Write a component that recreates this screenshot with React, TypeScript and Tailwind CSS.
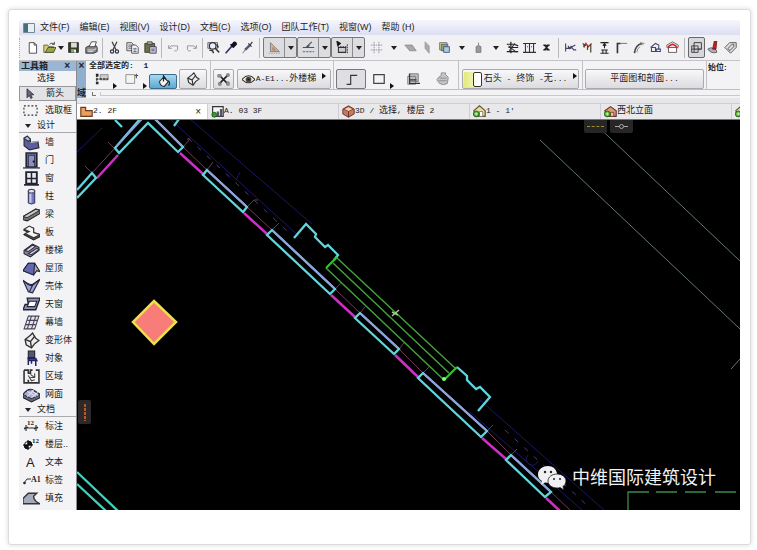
import React from "react";

const menus = ["文件(F)", "编辑(E)", "视图(V)", "设计(D)", "文档(C)", "选项(O)", "团队工作(T)", "视窗(W)", "帮助 (H)"];

const icons: Record<string, React.ReactNode> = {
  new: <path d="M4 2h6l3 3v10H4z M10 2v3h3" fill="#fff" stroke="#333" />,
  open: <><path d="M1 5h5l1 2h6v7H1z" fill="#d8d070" stroke="#554" /><path d="M3 14l3-6h10l-3 6z" fill="#96a846" stroke="#443" /><path d="M8 4q3-3 6 0M14 1v3h-3" fill="none" stroke="#333" /></>,
  save: <><path d="M2 2h12v12H2z" fill="#35401c" stroke="#222" /><path d="M5 2h7v6H5z" fill="#ddd" /><path d="M5 10h6v4H5z" fill="#8a8" /><path d="M9 11h2v3H9z" fill="#fff" /></>,
  print: <><path d="M1 8l4-2h9l1 2v5l-4 2H1z" fill="#888" stroke="#222" /><path d="M5 7l3-6h6l-2 6z" fill="#fff" stroke="#333" /><path d="M3 11h8l3-2M4 13h6" stroke="#eee" fill="none" /></>,
  cut: <><path d="M5 1l5 10M11 1L6 11" fill="none" stroke="#444" strokeWidth="1.6" /><circle cx="5" cy="13" r="2" fill="none" stroke="#334" strokeWidth="1.5" /><circle cx="11" cy="13" r="2" fill="none" stroke="#334" strokeWidth="1.5" /></>,
  copy: <><path d="M1 2h6l2 2v8H1z" fill="#ddd" stroke="#444" /><path d="M3 5h4M3 7h4M3 9h4" stroke="#667" /><path d="M7 5h5l3 3v7H7z" fill="#fff" stroke="#333" /><path d="M9 9h4M9 11h4M9 13h4" stroke="#446" /></>,
  paste: <><path d="M1 3h12v11H1z" fill="#6f7040" stroke="#332" /><path d="M4 1h6v3H4z" fill="#bbb" stroke="#333" /><path d="M7 7h8v8H7z" fill="#ccd" stroke="#335" /><path d="M9 10h4M9 12h4" stroke="#446" /></>,
  undo: <path d="M2 5v4h4M2 9l3-3h8v5q-1 2-4 1" fill="none" stroke="#999" strokeWidth="1.2" />,
  redo: <path d="M14 5v4h-4M14 9l-3-3H3v5q1 2 4 1" fill="none" stroke="#999" strokeWidth="1.2" />,
  find: <><path d="M1 2h12v7H1z" fill="#cdd" stroke="#556" /><circle cx="7" cy="6" r="4" fill="#eef" stroke="#333" strokeWidth="1.4" /><path d="M10 9l5 5M3 11l4 1 1 3M12 4l2 4" stroke="#333" strokeWidth="1.8" fill="none" /></>,
  dropper: <><path d="M2 15l8-9" stroke="#336" strokeWidth="2" /><path d="M8 4l4 4M9 6l3-4q3-1 3 2l-4 4" stroke="#112" strokeWidth="2" fill="#112" /></>,
  needle: <><path d="M2 15l4-5" stroke="#555" /><path d="M5 11l6-6" stroke="#557" strokeWidth="3" /><path d="M9 3l4 4M11 5l3-4" stroke="#334" strokeWidth="1.4" /></>,
  ruler: <><path d="M3 2v11h11z" fill="#e7b077" stroke="#678" /><path d="M6 8v3h3z" fill="#ddd" stroke="#678" /><path d="M1 15h14" stroke="#79c" strokeDasharray="2 1" /></>,
  guide: <><path d="M1 8h14M5 8l7-7M9 5l-2 3" stroke="#456" strokeWidth="1.4" fill="none" /><path d="M1 13h14" stroke="#58c" strokeWidth="1.6" strokeDasharray="3 1" /></>,
  snap: <><path d="M1 0l1 6 4-3z" fill="#111" stroke="#111" /><path d="M3 8h9v6H3z" fill="#ccc" stroke="#333" strokeWidth="1.3" /><path d="M2 7h12M14 4v11" stroke="#222" strokeDasharray="2 1" /></>,
  grid: <path d="M5 1v14M11 1v14M1 5h14M1 11h14" stroke="#889" strokeDasharray="2 1" fill="none" />,
  plane: <path d="M1 5h9l5 7H7z" fill="#aaa" stroke="#888" />,
  vplane: <path d="M5 1l5 5v9L5 9z" fill="#aaa" stroke="#999" />,
  layers: <><path d="M2 2h9v9H2z" fill="#e6dc76" stroke="#667" /><path d="M4 4h8v8H4z" fill="#87a87c" stroke="#557" /><path d="M7 7h7v7H7z" fill="#acd" stroke="#447" /></>,
  lock: <path d="M5 7q3-3 6 0v7H5zM8 5V2" fill="#999" stroke="#777" />,
  tree: <><path d="M1 4h9l5 2M3 8h12M1 13h14M6 1v14" fill="none" stroke="#222" strokeWidth="1.5" /><path d="M3 6l10 8M11 3L4 12" fill="none" stroke="#333" strokeWidth="1.3" /></>,
  table: <path d="M0 3h16M3 3v11M8 3v11M13 3v11M0 14h16M5 7h1M10 7h1" fill="none" stroke="#333" strokeWidth="1.3" />,
  cross: <path d="M4 5h3l1 2 1-2h3M4 11h3l1-3 1 3h3M5 5l6 6M11 5l-6 6" fill="none" stroke="#222" strokeWidth="1.5" />,
  trim: <path d="M2 3v10M2 9h7M6 9l8-4M8 6l4 5h3M5 6l2 4" stroke="#446" strokeWidth="1.4" fill="none" />,
  split: <><path d="M3 7l3-4 3 4 4-4" stroke="#b33" fill="none" strokeWidth="1.8" /><path d="M4 4v4M8 6v5M12 4v10M2 3l4 3" stroke="#443" strokeWidth="1.5" /></>,
  adjust: <path d="M3 2h10M8 3v6M6 6l2-3 2 3M4 11h8M6 11v4M10 11v4M3 15h10" stroke="#222" strokeWidth="1.3" fill="none" />,
  corner: <><path d="M3 15V3h4" fill="none" stroke="#333" strokeWidth="2" /><path d="M7 3h8" stroke="#888" strokeWidth="1.4" /></>,
  fillet: <><path d="M3 15Q4 5 12 3" fill="none" stroke="#444" strokeWidth="2" /><path d="M10 2l5 1-4 2M6 14q0-5 4-7" stroke="#777" fill="none" /></>,
  resize: <path d="M2 8l6-5 4 2v5M3 8h5v5H3zM9 10h5v3H9z" fill="none" stroke="#447" strokeWidth="1.3" />,
  roof: <><path d="M3 8h10v6H3z" fill="#fff" stroke="#444" /><path d="M1 8V5l7-4 7 4v3" fill="none" stroke="#555" /><path d="M2 9l2-3 4-2 4 2 2 3" fill="none" stroke="#d22" strokeWidth="2" /></>,
  group: <><path d="M5 2h9v8H5z" fill="none" stroke="#222" /><path d="M2 6h8v8H2z" fill="#ccc" fillOpacity="0.5" stroke="#333" /><path d="M5 6v8M2 10h12" stroke="#333" /></>,
  brush: <><path d="M1 10q4-3 7-1 5 2 4 5-7 2-11-4z" fill="#a9b0c0" stroke="#555" /><path d="M9 0h3l-1 10H7z" fill="#c22" stroke="#611" /></>,
  tag: <path d="M1 8l6-6h8v6l-7 7zM5 9l5-5h2v3l-5 5z" fill="#ddd" stroke="#444" />,
  arrow: <path d="M4 1v12l3-3 2 4 2-1-2-4h4z" fill="#667" stroke="#223" />,
  marquee: <path d="M1 3h14v10H1z" fill="none" stroke="#333" strokeDasharray="2 2" strokeWidth="1.3" />,
  wall: <><path d="M1 4l3-2 3 3v3l7-1 1 6-9 2-5-4z" fill="#5c5f9b" stroke="#223" /><path d="M1 4l3-2 3 3-2 2z" fill="#bcc0e0" stroke="#334" /><path d="M7 8l7-1" stroke="#ccd" /></>,
  door: <><path d="M3 1h10v13H3z" fill="#6d72a8" stroke="#223" strokeWidth="1.5" /><path d="M5 3h6v11H5z" fill="#8b91c4" stroke="#334" /><circle cx="10" cy="9" r="1" fill="#112" /><path d="M0 15h16" stroke="#334" strokeWidth="1.2" /></>,
  window: <><path d="M3 2h10v11H3z" fill="#e8eaf4" stroke="#223" strokeWidth="1.8" /><path d="M8 2v11M3 8h10" stroke="#223" strokeWidth="1.4" /><path d="M1 14h14" stroke="#223" strokeWidth="1.6" /></>,
  column: <><path d="M5 3v11q3 2 6 0V3z" fill="#7579b8" stroke="#336" /><path d="M7 4v10" stroke="#c5c8ea" strokeWidth="2" /><ellipse cx="8" cy="3" rx="3" ry="1.7" fill="#e6e6f0" stroke="#446" /></>,
  beam: <><path d="M0 10L12 3l4 1v3L4 14l-4-1z" fill="#777" stroke="#222" /><path d="M0 10L12 3l4 1L4 11z" fill="#ccc" stroke="#333" /></>,
  slab: <><path d="M1 6l5-3 4 1v4l6 2v2l-6 3-9-5 5-2z" fill="#555" stroke="#222" /><path d="M1 5l5-3 4 2v4l6 2-6 3-8-4 4-2z" fill="#f4f4f4" stroke="#333" /></>,
  stair: <><path d="M1 8l8-6 6 3v3l-8 6-6-3z" fill="#889" stroke="#223" /><path d="M2 8l7-5 3 1-7 5zM5 11l8-5 2 1-7 5z" fill="#dde" stroke="#334" /></>,
  roof3d: <><path d="M0 10L5 3l6 0 5 8-3-1-3 4z" fill="#aaa" stroke="#222" /><path d="M0 10l5-7h6l-1 11z" fill="#6368b0" stroke="#224" /></>,
  shell: <><path d="M0 2q6 5 9 4l7-5-7 13-4-1z" fill="#9ba2d6" stroke="#223" /><path d="M1 3q5 5 8 4L6 13M9 7l6-5" fill="none" stroke="#223" /></>,
  skylight: <><path d="M4 2h12l-4 11H0l2-5h3z" fill="#8c92b8" stroke="#223" strokeWidth="1.3" /><path d="M6 5h7l-2 5H4z" fill="#fff" stroke="#223" /></>,
  curtain: <><path d="M5 2h10l-4 12H1z" fill="#e4e4ee" stroke="#445" /><path d="M8 2L4 14M12 2L8 14M4 6h10M2 10h10" stroke="#445" fill="none" /></>,
  morph: <><path d="M2 7l5-4 2-2 3 5 3 2-4 3-3 4-5-3z" fill="#eee" stroke="#333" strokeWidth="1.3" /><path d="M2 7l5 2 1 6M7 9l4-5" fill="none" stroke="#333" strokeWidth="1.3" /></>,
  chair: <><path d="M5 1h6v6H5z" fill="#557" stroke="#222" /><path d="M5 8h7l1 2H6z" fill="#558" stroke="#226" strokeWidth="1.4" /><path d="M5 7v7M12 10v5M8 10v3" stroke="#226" strokeWidth="1.4" /></>,
  zone: <><path d="M1 2h4v3h2V2h2M12 2h3v12H1V2M5 14v-3" fill="none" stroke="#333" strokeWidth="1.5" /><path d="M7 6l4 3M11 5v4H7M5 7l3 5 3-1" fill="none" stroke="#444" /></>,
  mesh: <><path d="M0 8q5-7 10-4t6 4v3l-8 4-8-4z" fill="#667" stroke="#223" /><path d="M0 8q5-6 9-4t7 4l-8 4z" fill="#a9afd4" stroke="#334" /><path d="M4 5l8 5M8 4l6 5M4 10l6-6M8 11l6-5" stroke="#dde" fill="none" /></>,
  polyline: <path d="M2 14h5V3h8" fill="none" stroke="#333" strokeWidth="1.4" />,
  box: <path d="M2 3h12v10H2z" fill="none" stroke="#444" strokeWidth="1.4" />,
  cube: <><path d="M4 2h10v9H4z" fill="#bbb" stroke="#777" /><path d="M2 5h9v9H2z" fill="none" stroke="#777" /><path d="M4 2v11h12M4 9h8" fill="none" stroke="#333" strokeWidth="1.5" /></>,
  pot: <path d="M6 1h5v2l3 3-1 7q-5 3-9 0L1 9l2-3 3-2zM4 7h8M3 10h9" fill="#c5c5c8" stroke="#888" />,
  eye: <><path d="M0 8q8-9 16 0-8 8-16 0z" fill="#eee" stroke="#332" strokeWidth="1.3" /><circle cx="8" cy="8" r="3.5" fill="#544" /><circle cx="8" cy="8" r="1.3" fill="#111" /></>,
  nodes: <><path d="M4 4l9 9M13 3L3 13" stroke="#222" strokeWidth="2" /><path d="M1 2h4v3H1zM12 11h3v4h-3zM2 12h3v3H2zM12 1h3v3h-3z" fill="#999" stroke="#777" /></>,
  fillBucket: <><path d="M3 8l5-5 6 5-5 6q-5 0-6-6z" fill="#f4f4f4" stroke="#222" strokeWidth="1.3" /><path d="M8 8V1l3 4M14 7q3 4 0 6" fill="none" stroke="#222" strokeWidth="1.5" /></>,
  select: <><path d="M1 2h3v3H1zM1 11h3v3H1z" fill="#222" /><path d="M6 3h9v6H6z" fill="#ccc" stroke="#888" /><path d="M1 8h14M2 3v10" stroke="#333" strokeWidth="1.5" strokeDasharray="3 1" /></>,
  rotate: <><path d="M1 3h10v10H1z" fill="#f4f4f4" stroke="#888" /><path d="M11 4h4M13 2v5" stroke="#555" strokeWidth="1.3" /></>,
  folder: <path d="M1 3h6v4h8v7H1z" fill="#e8a05c" stroke="#6b3a1c" strokeWidth="1.4" />,
  layout: <><path d="M2 2h13v12H2z" fill="#f4f4f4" stroke="#333" strokeWidth="1.4" /><path d="M7 8h3v6H7zM11 5h3v9h-3z" fill="#556" /><circle cx="4" cy="12" r="3" fill="#3a9b2c" stroke="#195c14" /></>,
  view3d: <><path d="M1 5l7-4 7 4v6l-7 4-7-4z" fill="#c97a5b" stroke="#522" /><path d="M2 5l6 3 6-3-6-3z" fill="#f1d2a6" stroke="#833" /><path d="M8 8v7" stroke="#522" /></>,
  house: <><path d="M1 7l7-6 7 6v7H4z" fill="#ead9a0" stroke="#553" strokeWidth="1.4" /><path d="M8 8h4v6H8z" fill="#fff" stroke="#775" /><circle cx="4" cy="11" r="3.6" fill="#4fae2d" stroke="#1b6412" /><path d="M4 9v4M2 11h4" stroke="#dfd" /></>,
  brick: <><path d="M1 7l7-5 7 5v7H4z" fill="#dca070" stroke="#633" strokeWidth="1.4" /><path d="M8 9h4v5H8z" fill="#e8c49a" stroke="#733" /><circle cx="4" cy="11" r="3.6" fill="#4fae2d" stroke="#1b6412" /><path d="M4 9v4M2 11h4" stroke="#dfd" /></>,
  fill: <path d="M0 13V8l5-5h8l-3 3q0 4 6 7z" fill="#a6a9bb" stroke="#333" strokeWidth="1.3" />,
};

const Icon = ({ name, className = "size-[14px]" }: { name: string; className?: string }) => (
  <svg viewBox="0 0 16 16" className={`${className} shrink-0`} aria-hidden="true">{icons[name]}</svg>
);

const Caret = ({ className = "" }: { className?: string }) => (
  <svg viewBox="0 0 6 4" className={`h-1 w-1.5 shrink-0 ${className}`} aria-hidden="true"><path d="M0 0h6L3 4z" fill="#222" /></svg>
);

const RightCaret = ({ className = "" }: { className?: string }) => (
  <svg viewBox="0 0 4 6" className={`h-1.5 w-1 shrink-0 ${className}`} aria-hidden="true"><path d="M0 0v6l4-3z" fill="#111" /></svg>
);

// Latin runs are set a step smaller so they keep the half width of the Chinese glyphs
const Mixed = ({ text }: { text: string }) => (
  <span className="whitespace-pre font-['Liberation_Mono','Noto_Sans_CJK_SC',monospace] text-[9px]">
    {text.split(/([\x20-\x7e]+)/).map((part, i) => (
      <span key={i} className={/^[\x20-\x7e]/.test(part) ? "text-[8px]" : ""}>{part}</span>
    ))}
  </span>
);

const ToolbarButton = ({ name, wide = false }: { name: string; wide?: boolean }) => (
  <button
    aria-label={name}
    className={[
      "flex h-5 shrink-0 items-center justify-center",
      wide ? "w-[18px]" : "w-[17px]",
    ].join(" ")}
  >
    {name === "caret" ? <Caret /> : <Icon name={name} className="size-[13px]" />}
  </button>
);

const Separator = ({ wide = false }: { wide?: boolean }) => (
  <span className={["flex h-5 shrink-0 justify-center", wide ? "w-[7px]" : "w-[5px]"].join(" ")}>
    <span className="w-px bg-[#b9b9bd]" />
  </span>
);

const Toolbar = () => (
  <div className="flex h-[26px] items-center overflow-hidden border-b border-[#c4c4c8] bg-[#f1f0f3]">
    <span className="mr-px h-5 w-px shrink-0 border-l border-dotted border-[#aaa]" />
    <span className="w-0.5 shrink-0" />
    <ToolbarButton wide name="new" />
    <ToolbarButton name="open" />
    <Caret />
    {["save", "print"].map((n) => <ToolbarButton key={n} wide name={n} />)}
    <Separator />
    {["cut", "copy", "paste"].map((n) => <ToolbarButton key={n} wide name={n} />)}
    <Separator />
    {["undo", "redo"].map((n) => <ToolbarButton key={n} wide name={n} />)}
    <Separator />
    {["find", "dropper", "needle"].map((n) => <ToolbarButton key={n} name={n} />)}
    <Separator wide />
    {["ruler", "guide", "snap"].map((n) => (
      <div key={n} className="flex h-[21px] w-[34px] shrink-0 rounded-[2px] border border-[#77777c] bg-[#dddde0]">
        <button aria-label={n} className="flex flex-1 items-center justify-center border-r border-[#8a8a90]">
          <Icon name={n} className="size-[13px]" />
        </button>
        <button aria-label={`${n} options`} className="flex w-[11px] items-center justify-center"><Caret /></button>
      </div>
    ))}
    <span className="w-[3px] shrink-0" />
    {["grid", "caret", "plane", "vplane", "layers", "caret", "lock", "caret", "tree", "table", "cross"].map((n, i) => (
      <ToolbarButton key={i} name={n} />
    ))}
    <Separator wide />
    {["trim", "split", "adjust", "corner", "fillet", "resize", "roof"].map((n) => <ToolbarButton key={n} name={n} />)}
    <Separator wide />
    <button aria-label="group" className="flex h-[21px] w-[17px] shrink-0 items-center justify-center rounded-[2px] border border-[#66666c] bg-[#d8d8dc]">
      <Icon name="group" className="size-[13px]" />
    </button>
    {["brush", "tag"].map((n) => <ToolbarButton key={n} name={n} />)}
  </div>
);

const designTools = [
  ["wall", "墙"], ["door", "门"], ["window", "窗"], ["column", "柱"], ["beam", "梁"],
  ["slab", "板"], ["stair", "楼梯"], ["roof3d", "屋顶"], ["shell", "壳体"], ["skylight", "天窗"],
  ["curtain", "幕墙"], ["morph", "变形体"], ["chair", "对象"], ["zone", "区域"], ["mesh", "网面"],
];

const ToolRow = ({ icon, label }: { icon: React.ReactNode; label: string }) => (
  <button className="flex h-[18px] w-full items-center whitespace-nowrap pl-1 text-left">
    <span className="flex w-[22px] shrink-0 items-center">{icon}</span>
    {label}
  </button>
);

const DimensionIcon = () => (
  <svg viewBox="0 0 16 16" className="size-4" aria-hidden="true">
    <path d="M1 10h14M3 7v6M13 7v6M1 11l4-2M11 11l4-2" stroke="#333" strokeWidth="1.2" />
    <text x="4" y="7" fontSize="7" fontWeight="bold" fontFamily="Liberation Serif" fill="#222">12</text>
  </svg>
);

const LevelIcon = () => (
  <svg viewBox="0 0 16 16" className="size-4" aria-hidden="true">
    <circle cx="5" cy="9" r="3.5" fill="#fff" stroke="#111" />
    <path d="M5 9V5a4 4 0 0 1 4 4zM5 9v4a4 4 0 0 1-4-4zM0 9h10M5 4v10" fill="#111" stroke="#111" />
    <text x="9" y="7" fontSize="7" fontWeight="bold" fontFamily="Liberation Serif" fill="#222">12</text>
  </svg>
);

const LabelIcon = () => (
  <svg viewBox="0 0 18 16" className="h-4 w-[18px]" aria-hidden="true">
    <path d="M1 11l3-4h4" fill="none" stroke="#333" />
    <circle cx="1.500" cy="11" r="1.3" fill="#222" />
    <text x="8" y="10" fontSize="8" fontWeight="bold" fontFamily="Liberation Serif" fill="#222">A1</text>
  </svg>
);

const Toolbox = () => (
  <aside className="w-[58px] shrink-0 overflow-hidden border-r border-[#8b8b90] bg-[#f3f2f5] text-[9px] leading-none">
    <div className="flex h-[10px] items-center justify-between bg-[#9ab6d3] pl-0.5 pr-1.5 font-bold">
      工具箱
      <button aria-label="关闭工具箱" className="text-[10px]">×</button>
    </div>
    <p className="flex h-[15px] items-center pl-[18px]">选择</p>
    <button className="flex h-[15px] w-full items-center border border-[#98989c] bg-[#e2e1e5] pl-1 text-left">
      <span className="w-[22px]"><Icon name="arrow" className="size-3" /></span>箭头
    </button>
    <ToolRow icon={<Icon name="marquee" className="size-[15px]" />} label="选取框" />
    <button className="flex h-[14px] w-full items-center gap-1.5 border-b border-[#aaa] pl-1.5">
      <Caret />设计
    </button>
    {designTools.map(([icon, label]) => (
      <ToolRow key={icon} icon={<Icon name={icon} className="size-[17px]" />} label={label} />
    ))}
    <button className="flex h-[14px] w-full items-center gap-1.5 border-b border-[#aaa] pl-1.5">
      <Caret />文档
    </button>
    <ToolRow icon={<DimensionIcon />} label="标注" />
    <ToolRow icon={<LevelIcon />} label="楼层.." />
    <ToolRow icon={<span className="pl-[3px] text-[13px]">A</span>} label="文本" />
    <ToolRow icon={<LabelIcon />} label="标签" />
    <ToolRow icon={<Icon name="fill" className="size-[17px]" />} label="填充" />
  </aside>
);

const panelButton = "flex h-5 shrink-0 items-center justify-center rounded-[2px] border border-[#a9a9ae] bg-linear-to-b from-[#f8f8fa] to-[#dcdce0]";

const Divider = ({ className = "" }: { className?: string }) => (
  <span className={`w-px shrink-0 self-stretch bg-[#c2c2c6] ${className}`} />
);

const InfoBox = () => (
  <div className="flex h-[37px] overflow-hidden bg-[#f3f2f5] text-[9px] leading-none">
    <div className="flex w-[9px] shrink-0 flex-col items-center justify-between bg-[#8fafcf]">
      <button aria-label="关闭信息框" className="text-[10px] font-bold">×</button>
      <span className="font-bold">域</span>
    </div>
    <div className="flex min-w-0 flex-1 flex-col">
      <div className="flex h-[29px] border-b border-[#bdbdc2]">
        <div className="w-[124px] shrink-0">
          <p className="h-2 whitespace-pre pl-[3px] pt-px font-['Liberation_Mono','Noto_Sans_CJK_SC',monospace] text-[8px] font-bold">全部选定的:  1</p>
          <div className="flex h-5 items-center pl-[9px]">
            <Icon name="select" />
            <RightCaret className="ml-1 self-end" />
            <Icon name="rotate" className="ml-2 size-[14px]" />
            <RightCaret className="ml-1 self-end" />
            <button aria-label="填充" className="ml-0.5 flex h-[15px] w-7 shrink-0 items-center justify-center self-end rounded-[2px] border border-[#3c6c8c] bg-linear-to-b from-[#a8d8f0] to-[#5ba8d4]">
              <Icon name="fillBucket" className="size-[13px]" />
            </button>
            <button aria-label="变形体" className={`${panelButton} ml-0.5 w-7`}><Icon name="morph" className="size-[14px]" /></button>
          </div>
        </div>
        <Divider />
        <div className="flex items-end gap-[3px] px-0.5">
          <button aria-label="编辑节点" className={`${panelButton} w-[21px]`}><Icon name="nodes" className="size-[13px]" /></button>
          <button className={`${panelButton} w-[94px]`}>
            <Icon name="eye" className="mr-px size-[13px]" />
            <Mixed text="A-E1...外楼梯" />
            <RightCaret className="mb-1.5 ml-1.5" />
          </button>
        </div>
        <Divider />
        <div className="flex items-end">
          <button aria-label="折线" className="mx-0.5 flex h-5 w-[30px] items-center justify-center rounded-[2px] border border-[#77777c] bg-[#dfdfe3]">
            <Icon name="polyline" className="size-[13px]" />
          </button>
          <button aria-label="矩形" className="flex h-5 w-[30px] items-center justify-center gap-1"><Icon name="box" /><RightCaret className="self-end" /></button>
          <button aria-label="体块" className="flex h-5 w-[30px] items-center justify-center"><Icon name="cube" /></button>
          <button aria-label="壶" className="flex h-5 w-[30px] items-center justify-center"><Icon name="pot" /></button>
        </div>
        <Divider />
        <div className="flex items-end px-[3px]">
          <button className={`${panelButton} w-[117px]`}>
            <span className="mr-0.5 flex h-[15px] w-[18px] justify-end bg-linear-to-r from-[#e3e97b] to-[#fafbe0]">
              <span className="w-[9px] rounded-[2px] border border-[#333] bg-white" />
            </span>
            <Mixed text="石头 - 终饰 -无..." />
            <RightCaret className="mb-1.5 ml-1.5" />
          </button>
        </div>
        <Divider />
        <div className="flex items-end px-0.5">
          <button className={`${panelButton} w-[119px]`}><Mixed text="平面图和剖面..." /></button>
        </div>
        <Divider />
        <p className="whitespace-nowrap pl-px pt-[3px] text-[8px] font-bold">始位:</p>
      </div>
      <div className="flex flex-1 items-center pl-1.5">
        <span className="h-1 w-1 border-l border-b border-[#777]" />
        <span className="ml-1 h-1 flex-1 border-b border-l border-[#c9c9cd]" />
      </div>
    </div>
  </div>
);

const tabs = [
  { icon: "folder", label: "2. 2F", active: true },
  { icon: "layout", label: "A. 03 3F" },
  { icon: "view3d", label: "3D / 选择, 楼层 2" },
  { icon: "house", label: "1 - 1'" },
  { icon: "brick", label: "西北立面" },
  { icon: "house", label: "" },
];

const TabBar = () => (
  <div role="tablist" className="flex h-[22px] overflow-hidden border-b border-[#77777c] bg-[#e6e5e8] pt-[5px] leading-none">
    {tabs.map(({ icon, label, active }, i) => (
      <button
        key={i}
        role="tab"
        aria-selected={!!active}
        aria-label={label || "立面"}
        className={[
          "flex w-[131px] shrink-0 items-center border-r border-t border-[#cfced2] pl-[3px]",
          active ? "bg-white" : "bg-[#e9e8eb]",
        ].join(" ")}
      >
        <Icon name={icon} className="size-[13px]" />
        <Mixed text={label} />
        {active && <span className="ml-auto mr-1.5 text-[10px]">×</span>}
      </button>
    ))}
  </div>
);

const walls = [
  "M77 190L92 173L96 178L77 198", "M140 119L115 148L119 153L148 123L178 152L183 147L155 119",
  "M207 170L247 207L243 212L203 175Z", "M272 230L335 289L330 294L267 235Z",
  "M360 313L399 349L394 354L355 318Z", "M423 373L487 431L481 437L418 378Z",
  "M511 455L551 492L545 497L506 460Z",
];

const Canvas = () => (
  <div className="relative bg-black">
    <svg viewBox="77 120 663 390" className="block w-full" role="img" aria-label="2F 平面图" fill="none">
      <g stroke="#1c1668" strokeWidth="1">
        <path d="M77 152L102 128M170 119L302 239M190 119L312 224M480 400L604 510M470 412L582 510M240 172l-4 8M528 455a6 6 0 1 0 10 6" />
      </g>
      <g stroke="#5b3280" strokeWidth="1" strokeDasharray="5 8">
        <path d="M188 138L288 232M505 430L590 508" />
      </g>
      <g stroke="#6d3a50" strokeWidth="1">
        <path d="M92 173L115 148M183 147L207 170M247 207L272 230M335 289L360 313M399 349L423 373M487 431L511 455M551 492L570 510" />
        <path d="M108 142l6 6M85 166l6 6M183 147l7-8h-3M207 170l6-8M247 207l7-7h4M272 230l7-7M335 289l6-6M360 313l5-6M399 349l5-6M423 373l6-6M487 431l6-6M511 455l6-6" />
      </g>
      <path d="M97 178L118 155M180 153L203 174M244 213L267 234M331 295L355 317M395 355L418 377M482 438L506 459M546 498L560 511" stroke="#cf2fc4" strokeWidth="2.5" />
      <g stroke="#62d5dc" strokeWidth="2.3">
        {walls.map((d) => <path key={d} d={d} />)}
        <path d="M294 238L306 224L316 234L315 237L325 247L328 245L338 255L334 260M457 367L467 376L467 380L476 389L480 387L490 397L478 411M115 120L122 127M179 119L174 126" />
        <path d="M77 472L118 511M77 484L106 511" stroke="#3fd0c0" />
      </g>
      <path d="M142 119L117 146M155 119L182 146M208 171L246 206M273 231L334 288M361 314L398 348M424 374L486 430M512 456L550 491" stroke="#9a9ce0" strokeWidth="1.8" />
      <path d="M337 258L455 368M333 263L449 373M326 268L444 380" stroke="#43a03a" strokeWidth="1.5" />
      <path d="M337 257L326 268M444 380L457 367" stroke="#36c635" strokeWidth="2" />
      <circle cx="444" cy="379" r="2" fill="#7dff6e" />
      <path d="M392 316L399 310M392 312L398 315" stroke="#a9c99a" strokeWidth="1.5" />
      <path d="M540 140L740 329M591 120L740 261M731 369L740 359" stroke="#60796a" strokeWidth="1" />
      <path d="M628 510V492H649M656 492H677M685 492H706M715 492H736" stroke="#3d8c45" strokeWidth="1.3" />
      <path d="M154 301L176 322L154 344L133 322Z" fill="#f87c78" stroke="#efe04a" strokeWidth="2.5" />
    </svg>
    <div className="absolute right-[107px] top-0 flex gap-[3px]">
      <button aria-label="虚线" className="flex h-[13px] w-[23px] items-center justify-center rounded-b-[2px] bg-[#262626]">
        <span className="w-[17px] border-t border-dashed border-[#a08c2c]" />
      </button>
      <button aria-label="轴线" className="flex h-[13px] w-[23px] items-center justify-center rounded-b-[2px] bg-[#262626]">
        <span className="w-1 border-t border-[#aaa]" />
        <span className="size-[5px] rounded-full border border-[#aaa]" />
        <span className="w-1 border-t border-[#aaa]" />
      </button>
    </div>
    <button aria-label="竖线" className="absolute left-px top-[280px] flex h-6 w-[13px] items-center justify-center rounded-[2px] bg-[#2b2929]">
      <svg viewBox="0 0 2 17" className="h-[17px] w-0.5" aria-hidden="true"><path d="M1 0v17" stroke="#b35a30" strokeWidth="2" strokeDasharray="3 1" /></svg>
    </button>
    <div className="absolute bottom-[18px] right-6 flex items-center gap-1.5 text-[18px] leading-7 text-[#f2f2f2]">
      <svg viewBox="0 0 28 24" className="h-6 w-7" aria-hidden="true">
        <path d="M10 0C4 0 0 4 0 8.500q0 4 4 6.500L3 19l4-2.500q9 2 12-4.500 1-2 0-5Q17 0 10 0z" fill="#f0eff2" />
        <path d="M19 8c-5 0-9 3-9 7s4 7 9 7q2 0 3-.5l4 2.500-1-3.500q3-2 3-5.500c0-4-4-7-9-7z" fill="#f0eff2" stroke="#1a1a1a" strokeWidth="0.8" />
        <g fill="#222"><circle cx="7" cy="6" r="1.2" /><circle cx="13" cy="6" r="1.2" /><circle cx="16" cy="13" r="1" /><circle cx="22" cy="13" r="1" /></g>
      </svg>
      中维国际建筑设计
    </div>
  </div>
);

const App = () => {
  return (
    <main className="bg-white pb-1 pl-2 pr-1.5 pt-[9px] font-['Liberation_Sans','Noto_Sans_CJK_SC',sans-serif] text-[#222]">
      <article className="rounded-[3px] border border-[#dcdcdc] bg-white pb-[34px] pl-[10px] pr-[10px] pt-[10px] shadow-[0_0_5px_#d8d8d8]">
        <nav className="flex h-[15px] items-center gap-[10px] overflow-hidden bg-linear-to-b from-[#f6f6fc] to-[#dcdff2] pl-1 text-[9px] leading-none">
          <div className="flex shrink-0 items-center gap-[5px]">
            <svg viewBox="0 0 12 10" className="h-[10px] w-3 shrink-0" aria-hidden="true">
              <path d="M.5.500h11v9H.5z" fill="#e8f0f4" stroke="#789" />
              <path d="M1 1h4v8H1z" fill="#47707c" />
            </svg>
            <button className="whitespace-nowrap">{menus[0]}</button>
          </div>
          {menus.slice(1).map((menu) => <button key={menu} className="shrink-0 whitespace-nowrap">{menu}</button>)}
        </nav>
        <Toolbar />
        <div className="flex">
          <Toolbox />
          <section className="min-w-0 flex-1">
            <InfoBox />
            <TabBar />
            <Canvas />
          </section>
        </div>
      </article>
    </main>
  );
};

export default App;
